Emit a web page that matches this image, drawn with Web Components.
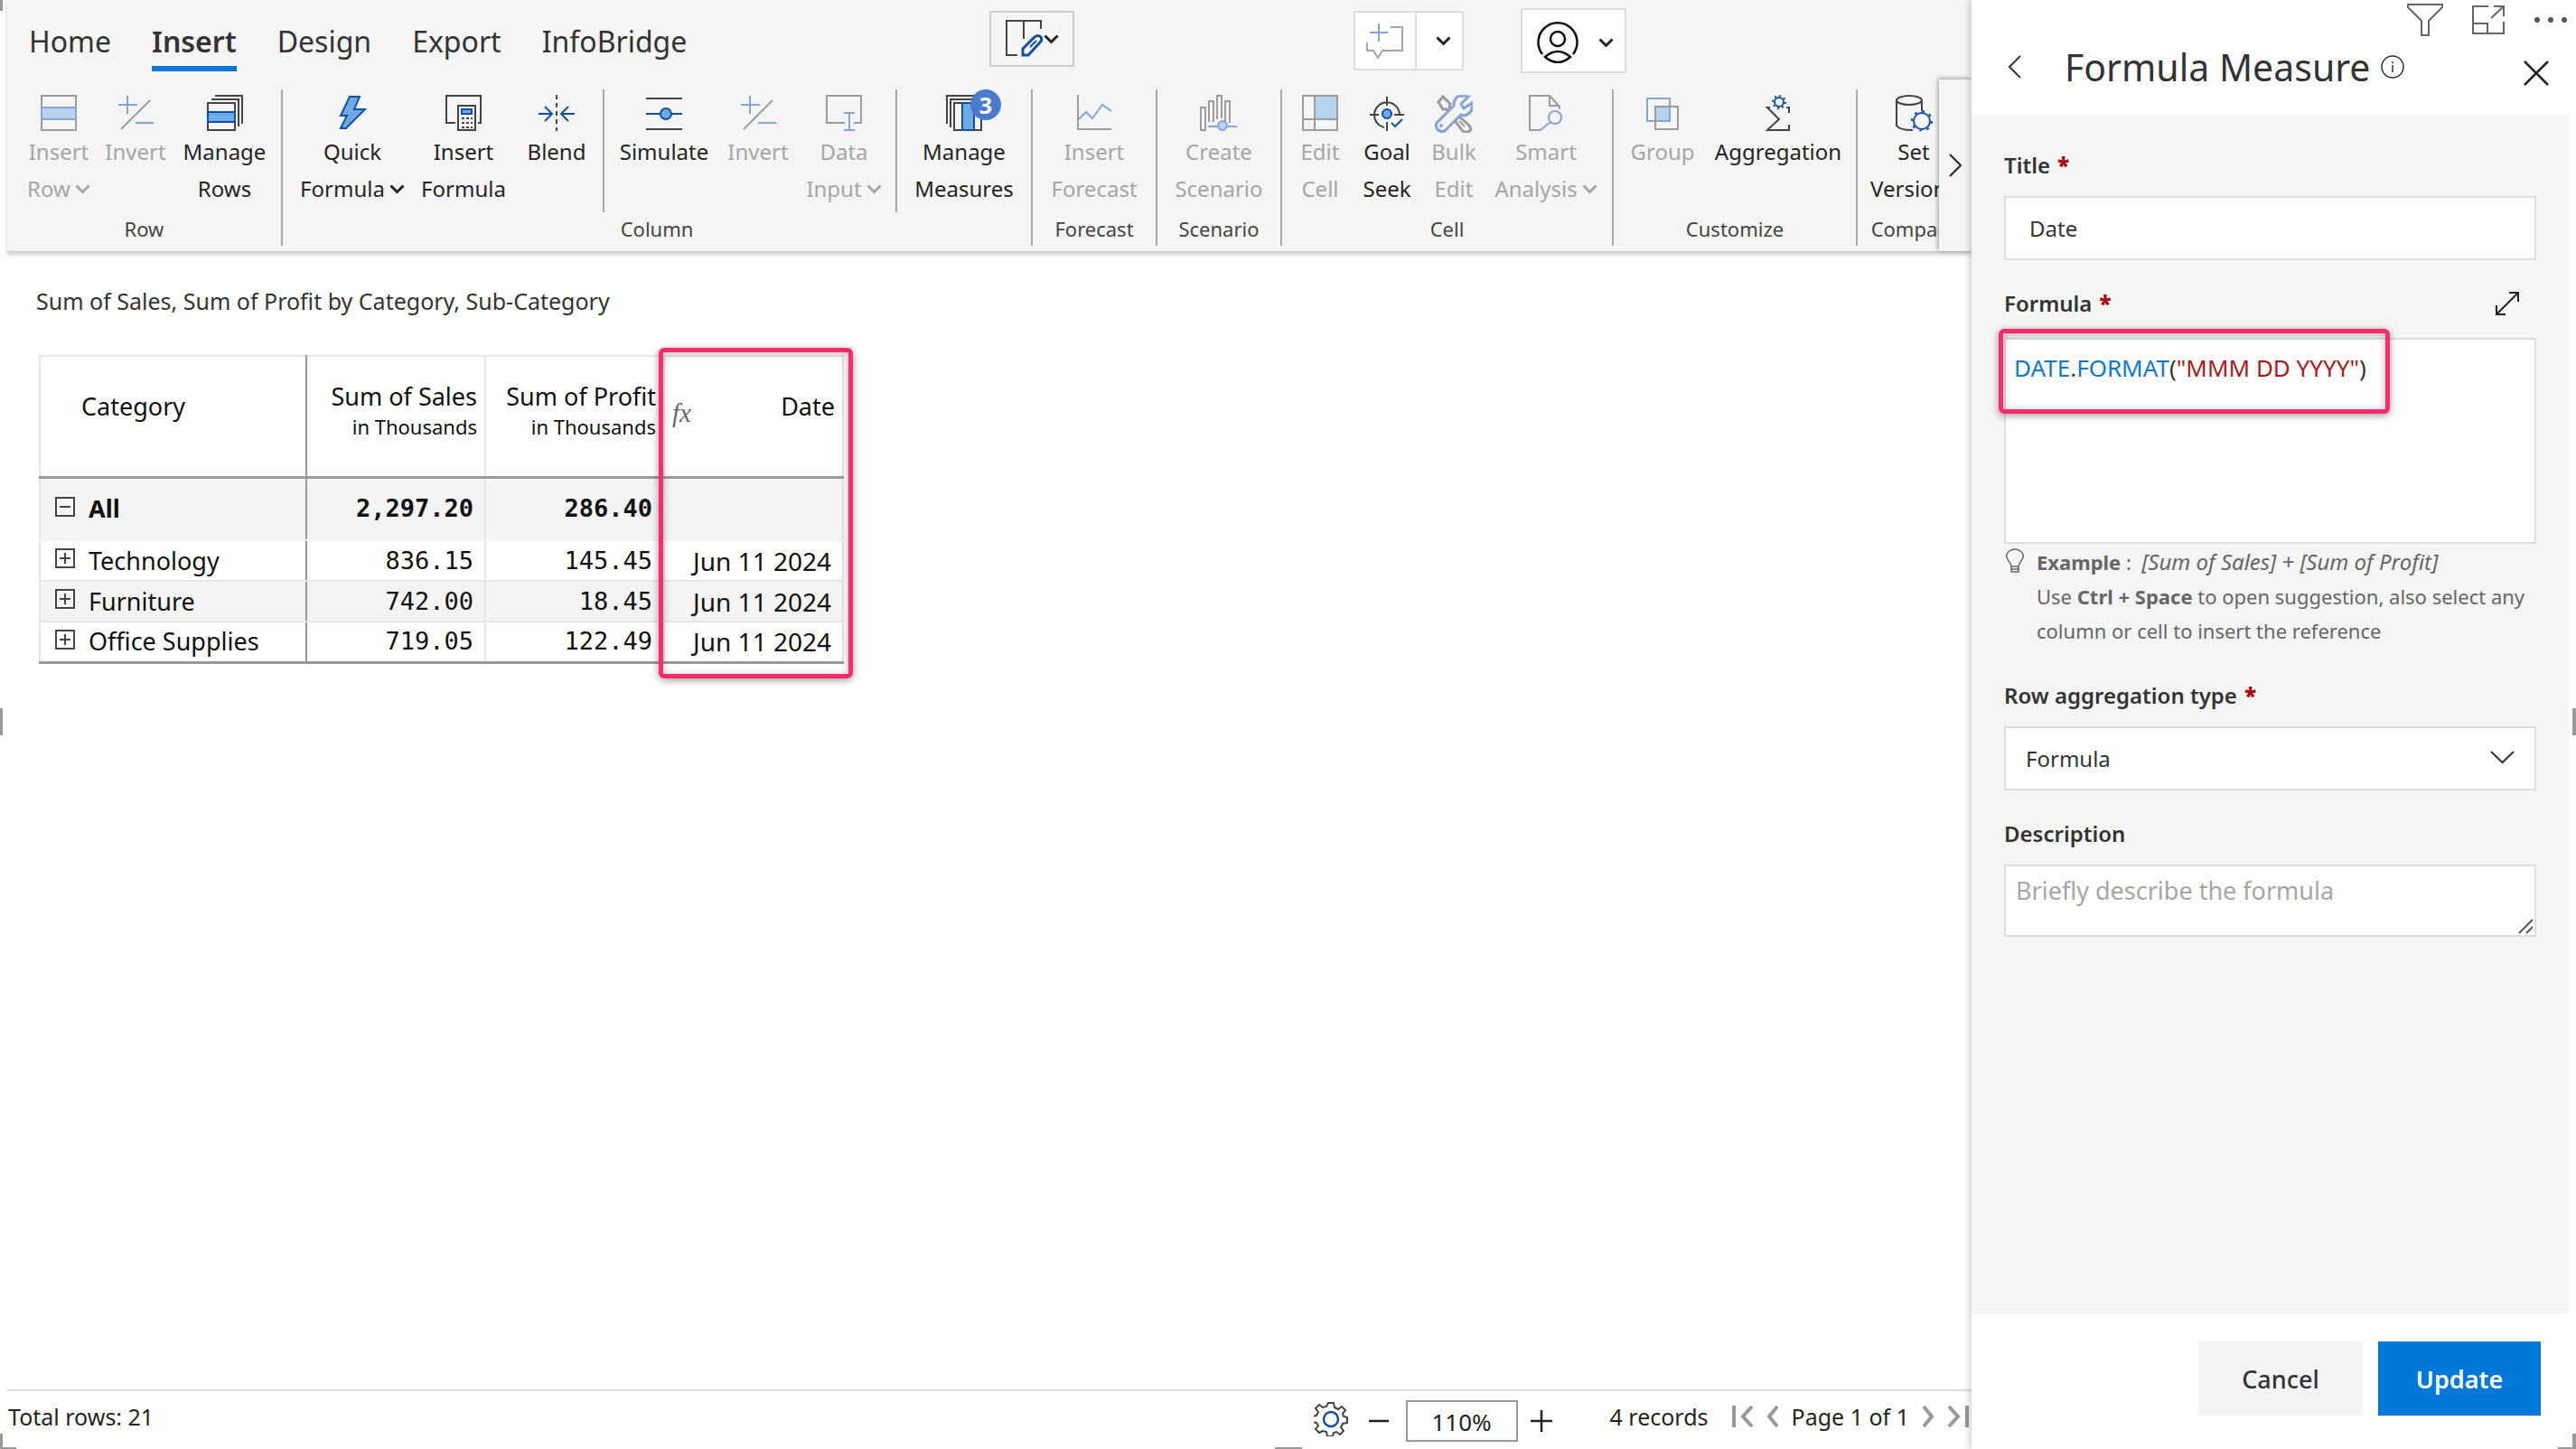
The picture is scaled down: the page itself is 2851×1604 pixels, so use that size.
<!DOCTYPE html>
<html lang="en">
<head>
<meta charset="utf-8">
<title>Formula Measure</title>
<style>
  html, body { margin: 0; height: 100%; background: #fff; }
  body { font-family: "Noto Sans", "Open Sans", sans-serif; color: #252423; }
</style>
</head>
<body>
<report-app></report-app>

<script>
const ICONS = {
  insertRow: [40, 40, `<path class="k" d="M1 1h38v38H1z"/><path class="b f" d="M1 14h38v13H1z"/>`],
  invert: [40, 40, `<path class="b" d="M1 11h21M11 1v20M20 31h20"/><path class="k" d="M4 38L36 6"/>`],
  manageRows: [40, 40, `<path class="k" d="M9 1h30v31M5 5h30v30M1 9h30v30H1z"/><path class="b f" d="M1 19h30v11H1z"/>`],
  quick: [40, 40, `<path class="b f" d="M17 2h11l-6 14h12L13 37h-6l7-14H7z"/>`],
  insertFormula: [40, 40, `<path class="k" d="M11 31H1V1h38v30h-3"/><path class="k" d="M14 12h19v27H14z"/><path class="b f" d="M18 16h11v5H18z"/><path class="k" stroke-dasharray="3 2" d="M18 26h12M18 31h12M18 36h12"/>`],
  blend: [40, 40, `<path class="k" stroke-dasharray="5 4" d="M20 0v40"/><path class="b" d="M0 21h15M7 13l8 8-8 8M40 21H25M33 13l-8 8 8 8"/>`],
  simulate: [40, 40, `<path class="k" d="M0 4h40M0 38h40"/><path class="b" d="M0 21h40"/><circle class="b f" cx="22" cy="21" r="6"/>`],
  dataInput: [40, 40, `<path class="k" d="M21 31H1V1h38v30h-8"/><path class="b" d="M20 20h12M26 20v19M20 39h12"/>`],
  manageMeasures: [40, 40, `<path class="k" d="M1 32V1h31M5 36V5h30M9 9h30v30H9z"/><path class="b f" d="M18 9h13v30H18z"/>`],
  forecast: [40, 40, `<path class="k" d="M2 0v38h37"/><path class="b" d="M3 27l8-8 7 7 11-15 10 7"/>`],
  scenario: [42, 40, `<path class="k" d="M1 14h5v25H1zM10 30V7h5v23M19 27V1h5v25M28 30V7h5v24"/><path class="b" d="M9 35h32"/><circle class="b f" cx="25" cy="34" r="5"/>`],
  editCell: [40, 40, `<path class="f" d="M14 1h25v25H14z"/><path class="k" d="M1 1h38v38H1zM14 1v38M1 27h38"/>`],
  goal: [40, 40, `<path class="k" d="M34 22A14 14 0 1 0 17 36M20 2v10M20 30v10M1 22h10M28 22h11"/><circle class="b f" cx="20" cy="21" r="5"/><path class="b" d="M25 31l4 4 8-8"/>`],
  bulk: [42, 42, `<path class="k w" d="M4 8l5-6 8 8-1 4 22 20q4 6-2 7-4 1-6-2L13 16l-4 0z"/><path class="k" d="M27 29l6 6"/><path class="b w" d="M37 2l-8 8 3 5 9-6q2 12-9 14l-3-1L12 39q-5 4-10-2-2-5 2-8l17-17q0-11 9-11z"/><circle class="b" cx="7" cy="34" r="1"/>`],
  smart: [40, 40, `<path class="k" d="M14 39H2V1h22l11 12v3M24 1v11h10"/><circle class="b" cx="30" cy="25" r="7"/><path class="b" d="M25 30L14 39"/>`],
  group: [40, 40, `<path class="f" d="M12 13h16v15H12z"/><path class="b" d="M3 4h25v25H3z"/><path class="k" d="M12 13h25v25H12z"/>`],
  aggregation: [40, 40, `<path class="k" d="M11 14H8l13 13L8 39h24v-6M32 20v-6h-3"/><circle class="b" cx="21" cy="8" r="5"/><circle class="b" cx="21" cy="8" r="7" stroke-dasharray="2 3.5"/>`],
  setVersion: [42, 40, `<ellipse class="k" cx="16" cy="6" rx="14" ry="5"/><path class="k" d="M2 6v28q3 5 18 5M30 6v12"/><circle class="b" cx="30" cy="29" r="9"/><circle class="b" cx="30" cy="29" r="11" stroke-dasharray="3 5.6"/>`],
  layoutEdit: [42, 42, `<path class="k" d="M13 39H1V1h38v9M20 1v20"/><path class="b" style="stroke-width:3" d="M19 32l13-13q4-3 7 0 2 4-1 6L25 39h-6z"/><path class="b" d="M27 30l7-7"/>`],
  comment: [42, 40, `<path class="b" d="M4 11h20M14 1v20"/><path class="k" d="M27 5h13v26H18l-5 8-5-8H1v-9"/>`],
  user: [46, 46, `<g fill="none" stroke="#111" stroke-width="2.5"><path d="M6 36a21.500 21.500 0 1 1 34 0"/><circle cx="23" cy="19" r="8"/><path d="M9 39q14-12 28 0-14 12-28 0z"/></g>`],
  caret: [17, 11, `<path d="M1.500 1.500l7 7 7-7" fill="none" stroke="currentColor" stroke-width="3"/>`],
  right: [14, 26, `<path d="M1 1l12 12L1 25" fill="none" stroke="currentColor" stroke-width="2"/>`],
  left: [14, 26, `<path d="M13 1L1 13l12 12" fill="none" stroke="currentColor" stroke-width="2"/>`],
  down: [27, 15, `<path d="M1 1l12.500 12L26 1" fill="none" stroke="currentColor" stroke-width="2"/>`],
  filter: [40, 36, `<path d="M1 1h38v3L24 19v16h-8V19L1 4z" fill="none" stroke="#666" stroke-width="2"/>`],
  focus: [36, 32, `<path d="M18 1H1v30h34V18M1 20h16v11M21 14L35 1M24 1h11v11" fill="none" stroke="#666" stroke-width="2"/>`],
  more: [38, 8, `<g fill="#555"><circle cx="4" cy="4" r="3"/><circle cx="19" cy="4" r="3"/><circle cx="34" cy="4" r="3"/></g>`],
  info: [26, 26, `<circle cx="13" cy="13" r="12" fill="none" stroke="#333" stroke-width="1.500"/><path d="M13 11v8M13 7v2" stroke="#333" stroke-width="1.500"/>`],
  close: [28, 28, `<path d="M1 1l26 26M27 1L1 27" stroke="#222" stroke-width="2.500"/>`],
  expand: [26, 26, `<path d="M1 25L25 1M15 1h10v10M1 15v10h10" fill="none" stroke="#222" stroke-width="2"/>`],
  bulb: [20, 28, `<path d="M6 20q-1-4-3-6-5-7 1-11 6-4 12 0 6 4 1 11-2 2-3 6zM6 20v6h8v-6M6 23h8" fill="none" stroke="#666" stroke-width="1.500"/>`],
  resizer: [17, 17, `<path d="M1 16L16 1M9 16l7-7" stroke="#555" stroke-width="2"/>`],
  gear: [38, 38, `<path d="M16 2h6l1 5 4 2 4-3 4 4-3 4 1 3 4 1v6l-5 1-2 4 3 4-4 4-4-3-3 1-1 4h-6l-1-5-4-1-4 2-4-4 3-4-2-3-5-1v-6l5-1 2-4-3-4 4-4 4 3 4-1z" transform="translate(0 -1)" fill="none" stroke="#444" stroke-width="2"/><circle cx="19" cy="19" r="8" fill="none" stroke="#1250a5" stroke-width="2.500"/>`],
  minus: [24, 24, `<path d="M1 12h22" stroke="#222" stroke-width="2.500"/>`],
  plus: [24, 24, `<path d="M0 12h24M12 0v24" stroke="#222" stroke-width="2.500"/>`],
  first: [24, 24, `<path d="M2 0v24M22 1L12 12l10 11" fill="none" stroke="#999" stroke-width="4"/>`],
  prev: [14, 24, `<path d="M12 1L3 12l9 11" fill="none" stroke="#999" stroke-width="4"/>`],
  next: [14, 24, `<path d="M2 1l9 11-9 11" fill="none" stroke="#999" stroke-width="4"/>`],
  last: [24, 24, `<path d="M22 0v24M2 1l10 11L2 23" fill="none" stroke="#999" stroke-width="4"/>`],
  boxMinus: [22, 22, `<path d="M1 1h20v20H1zM5 11h12" fill="none" stroke="#444" stroke-width="2"/>`],
  boxPlus: [22, 22, `<path d="M1 1h20v20H1zM5 11h12M11 5v12" fill="none" stroke="#444" stroke-width="2"/>`]
};

const define = (name, html) => customElements.define(name, class extends HTMLElement {
  constructor() {
    super();
    this.attachShadow({ mode: "open" });
  }
  connectedCallback() {
    if (this.shadowRoot.childNodes.length) return;
    this.shadowRoot.innerHTML = typeof html === "function" ? html(this) : html;
  }
});

const RESET = `
  *, *::before, *::after { box-sizing: border-box; }
  button { font: inherit; color: inherit; background: none; border: 0; padding: 0; margin: 0; display: inline-flex; align-items: center; justify-content: center; }
`;

define("ui-icon", el => {
  const [w, h, body] = ICONS[el.getAttribute("name")];
  return `<style>
    :host { display: inline-block; line-height: 0; flex: none; }
    svg { display: block; }
    .k, .b { fill: none; stroke-width: 2; }
    .k { stroke: var(--ink, #444); }
    .b { stroke: var(--accent, #1250a5); }
    .f { fill: var(--tint, #6eaae6); }
    .w { fill: #f5f5f5; stroke-width: 3; }
  </style><svg width="${w}" height="${h}" viewBox="0 0 ${w} ${h}" aria-hidden="true">${body}</svg>`;
});

define("ribbon-tab", `<style>${RESET}
    :host { display: block; }
    button { font-size: 32px; line-height: 44px; height: 55px; align-items: flex-start; border-bottom: 6px solid transparent; color: #333; }
    :host([active]) button { font-weight: 600; border-color: #0078d4; }
  </style><button type="button" role="tab"><slot></slot></button>`);

define("ribbon-button", el => `<style>${RESET}
    :host { display: block; flex: none; width: var(--w); }
    button { width: 100%; padding-top: 6px; flex-direction: column; justify-content: flex-start; color: #252423; position: relative; }
    .label { font-size: 24px; line-height: 41px; margin-top: 2px; white-space: nowrap; text-align: center; }
    .label ui-icon { margin-left: 5px; vertical-align: 3px; }
    :host([disabled]) { --ink: #9c9c9c; --accent: #86a5d4; --tint: #b5d3ef; }
    :host([disabled]) button { color: #a6a6a6; }
    .art { position: relative; display: block; height: 40px; }
    .badge { position: absolute; left: 27px; top: -6px; width: 34px; height: 34px; border-radius: 50%; background: #4a7ccb; color: #fff; font-weight: 700; font-size: 25px; line-height: 34px; text-align: center; }
  </style><button type="button" ${el.hasAttribute("disabled") ? "disabled" : ""}>
    <span class="art"><ui-icon name="${el.getAttribute("icon")}"></ui-icon>${el.hasAttribute("badge") ? `<span class="badge">${el.getAttribute("badge")}</span>` : ""}</span>
    <span class="label"><slot></slot>${el.hasAttribute("caret") ? `<ui-icon name="caret"></ui-icon>` : ""}</span></button>`);

define("ribbon-group", el => `<style>${RESET}
    :host { display: flex; flex-direction: column; flex: none; height: 173px; border-right: 2px solid #aaa; }
    .row { display: flex; height: 136px; padding: 0 var(--pr, 0) 0 var(--pl, 0); }
    .name { font-size: 22px; line-height: 36px; text-align: center; color: #444; white-space: nowrap; }
    ::slotted(hr) { margin: 0; border: 0; width: 2px; height: 136px; flex: none; background: #aaa; }
  </style><div class="row"><slot></slot></div><div class="name">${el.getAttribute("name")}</div>`);

define("app-ribbon", `<style>${RESET}
    :host { display: block; background: #f5f5f5; height: 278px; margin-left: 8px; border-bottom: 1px solid #ccc; box-shadow: 0 3px 5px #0003; position: relative; }
    .top { display: grid; grid-template-columns: 1087fr 403fr 185fr 499fr; height: 99px; align-items: start; }
    nav { display: flex; gap: 45px; padding: 24px 0 0 24px; }
    .layout { width: 94px; height: 62px; margin-top: 12px; border: 2px solid #ccc; }
    .split { display: flex; width: 122px; height: 66px; margin-top: 12px; border: 2px solid #ddd; background: #fff; }
    .split button:first-child { width: 68px; border-right: 2px solid #ddd; --ink: #a5a5a5; --accent: #86a5d4; }
    .split button:last-child { flex: 1; padding-left: 8px; }
    .user { width: 117px; height: 72px; margin-top: 9px; border: 2px solid #ddd; background: #fff; gap: 22px; padding: 4px 0 0 3px; }
    .groups { display: flex; overflow: hidden; height: 176px; }
    .scroll { position: absolute; right: 0; bottom: 0; width: 36px; height: 190px; background: #f5f5f5; box-shadow: -1px -1px 5px #0006; }
  </style>
  <div class="top">
    <nav role="tablist"><ribbon-tab>Home</ribbon-tab><ribbon-tab active>Insert</ribbon-tab><ribbon-tab>Design</ribbon-tab><ribbon-tab>Export</ribbon-tab><ribbon-tab>InfoBridge</ribbon-tab></nav>
    <button class="layout" type="button" aria-label="Edit layout"><ui-icon name="layoutEdit"></ui-icon><ui-icon name="caret"></ui-icon></button>
    <div class="split"><button type="button" aria-label="Add comment"><ui-icon name="comment"></ui-icon></button><button type="button" aria-label="Comment options"><ui-icon name="caret"></ui-icon></button></div>
    <button class="user" type="button" aria-label="Account"><ui-icon name="user"></ui-icon><ui-icon name="caret"></ui-icon></button>
  </div>
  <div class="groups">
    <ribbon-group name="Row" style="--pl:14px;--pr:6px">
      <ribbon-button icon="insertRow" disabled caret style="--w:86px">Insert<br>Row</ribbon-button>
      <ribbon-button icon="invert" disabled style="--w:84px">Invert</ribbon-button>
      <ribbon-button icon="manageRows" style="--w:113px">Manage<br>Rows</ribbon-button>
    </ribbon-group>
    <ribbon-group name="Column" style="--pl:6px">
      <ribbon-button icon="quick" caret style="--w:142px">Quick<br>Formula</ribbon-button>
      <ribbon-button icon="insertFormula" style="--w:104px">Insert<br>Formula</ribbon-button>
      <ribbon-button icon="blend" style="--w:102px">Blend</ribbon-button>
      <hr>
      <ribbon-button icon="simulate" style="--w:132px">Simulate</ribbon-button>
      <ribbon-button icon="invert" disabled style="--w:76px">Invert</ribbon-button>
      <ribbon-button icon="dataInput" disabled caret style="--w:114px">Data<br>Input</ribbon-button>
      <hr>
      <ribbon-button icon="manageMeasures" badge="3" style="--w:148px">Manage<br>Measures</ribbon-button>
    </ribbon-group>
    <ribbon-group name="Forecast"><ribbon-button icon="forecast" disabled style="--w:136px">Insert<br>Forecast</ribbon-button></ribbon-group>
    <ribbon-group name="Scenario"><ribbon-button icon="scenario" disabled style="--w:136px">Create<br>Scenario</ribbon-button></ribbon-group>
    <ribbon-group name="Cell" style="--pl:5px;--pr:8px">
      <ribbon-button icon="editCell" disabled style="--w:74px">Edit<br>Cell</ribbon-button>
      <ribbon-button icon="goal" style="--w:74px">Goal<br>Seek</ribbon-button>
      <ribbon-button icon="bulk" disabled style="--w:74px">Bulk<br>Edit</ribbon-button>
      <ribbon-button icon="smart" disabled caret style="--w:130px">Smart<br>Analysis</ribbon-button>
    </ribbon-group>
    <ribbon-group name="Customize" style="--pl:4px;--pr:8px">
      <ribbon-button icon="group" disabled style="--w:100px">Group</ribbon-button>
      <ribbon-button icon="aggregation" style="--w:156px">Aggregation</ribbon-button>
    </ribbon-group>
    <ribbon-group name="Compare"><ribbon-button icon="setVersion" style="--w:124px">Set<br>Versions</ribbon-button></ribbon-group>
  </div>
  <button class="scroll" type="button" aria-label="Scroll ribbon"><ui-icon name="right"></ui-icon></button>`);

const ROWS = [
  ["All", "2,297.20", "286.40", ""],
  ["Technology", "836.15", "145.45", "Jun 11 2024"],
  ["Furniture", "742.00", "18.45", "Jun 11 2024"],
  ["Office Supplies", "719.05", "122.49", "Jun 11 2024"]
];

define("pivot-table", () => `<style>${RESET}
    :host { display: block; position: relative; width: max-content; color: #111; }
    table { border-collapse: collapse; table-layout: fixed; width: 890px; font-size: 27px; }
    .c1 { width: 295px; } .c2, .c3, .c4 { width: 198px; }
    th, td { border: 2px solid #e6e6e6; padding: 0; font-weight: 400; line-height: 34px; }
    thead th { height: 134px; border-bottom: 3px solid #999; text-align: right; padding-right: 8px; vertical-align: middle; white-space: nowrap; }
    thead th:first-child { text-align: left; padding: 0 0 22px 45px; }
    thead th:first-child, tbody th { border-right: 2px solid #999; }
    thead th small { display: block; font-size: 22px; line-height: 32px; }
    thead .sum { padding-bottom: 12px; }
    thead .date { padding-bottom: 8px; }
    .date div { display: flex; justify-content: space-between; padding-left: 8px; }
    .date i { font: italic 29px/48px "Liberation Serif", serif; color: #666; }
    tbody th { text-align: left; }
    tbody th div { display: flex; align-items: center; gap: 15px; padding-left: 16px; }
    tbody th button { margin-bottom: 5px; }
    tbody tr { height: 45px; }
    tbody tr:nth-child(odd) { background: #f4f4f4; }
    tbody tr:first-child { height: 70px; }
    tbody tr:first-child > * { font-weight: 700; border-bottom-color: #f4f4f4; }
    tbody tr:last-child > * { border-bottom: 3px solid #999; }
    td { text-align: right; padding-right: 12px; font-family: "DejaVu Sans Mono", monospace; }
    td:last-child { font-family: inherit; font-size: 28px; }
    .mark { position: absolute; top: -8px; bottom: -16px; right: -10px; width: 215px; border: 5px solid #fb2c6c; border-radius: 6px; box-shadow: 0 2px 8px #0006, inset 0 2px 10px #0004; }
  </style>
  <table>
    <colgroup><col class="c1"><col class="c2"><col class="c3"><col class="c4"></colgroup>
    <thead><tr><th scope="col">Category</th><th scope="col" class="sum">Sum of Sales<small>in Thousands</small></th><th scope="col" class="sum">Sum of Profit<small>in Thousands</small></th><th scope="col" class="date"><div><i>fx</i><span>Date</span></div></th></tr></thead>
    <tbody>${ROWS.map((r, i) => `<tr><th scope="row"><div><button type="button" aria-label="Toggle ${r[0]}"><ui-icon name="${i ? "boxPlus" : "boxMinus"}"></ui-icon></button><span>${r[0]}</span></div></th><td>${r[1]}</td><td>${r[2]}</td><td>${r[3]}</td></tr>`).join("")}</tbody>
  </table><div class="mark"></div>`);

define("status-bar", `<style>${RESET}
    :host { box-sizing: border-box; display: flex; align-items: flex-start; height: 66px; margin-left: 8px; border-top: 2px solid #ddd; font-size: 25px; line-height: 36px; padding: 10px 3px 0 1px; white-space: nowrap; }
    .total { flex: 1; }
    .zoom { display: flex; align-items: center; gap: 18px; margin-right: 64px; height: 46px; }
    .gear { margin: 0 4px 4px 0; }
    input { width: 124px; height: 46px; border: 2px solid #999; text-align: center; font: inherit; font-size: 26px; color: #222; padding: 2px 0 0; background: #fff; }
    .zoom button:last-child { margin-left: -4px; }
    .pages { display: flex; align-items: center; gap: 14px; height: 36px; }
    .pages span:first-child { margin-right: 12px; }
  </style>
  <span class="total">Total rows: 21</span>
  <div class="zoom"><button class="gear" type="button" aria-label="Settings"><ui-icon name="gear"></ui-icon></button><button type="button" aria-label="Zoom out"><ui-icon name="minus"></ui-icon></button><input aria-label="Zoom" value="110%"><button type="button" aria-label="Zoom in"><ui-icon name="plus"></ui-icon></button></div>
  <div class="pages"><span>4 records</span><button type="button" aria-label="First page"><ui-icon name="first"></ui-icon></button><button type="button" aria-label="Previous page"><ui-icon name="prev"></ui-icon></button><span>Page 1 of 1</span><button type="button" aria-label="Next page"><ui-icon name="next"></ui-icon></button><button type="button" aria-label="Last page"><ui-icon name="last"></ui-icon></button></div>`);

define("formula-panel", `<style>${RESET}
    :host { display: flex; flex-direction: column; background: #fff; box-shadow: -2px 0 8px #0003; position: relative; color: #333; }
    .tools { display: flex; justify-content: flex-end; align-items: center; gap: 32px; height: 44px; padding-right: 9px; }
    header { display: flex; align-items: center; height: 83px; padding: 0 30px 23px 41px; }
    h1 { margin: 0 12px 0 48px; font-weight: 400; font-size: 41px; line-height: 60px; }
    header .close { margin: 14px 0 0 auto; }
    main { flex: 1; margin-right: 8px; background: #f5f5f5; padding: 38px 36px 0; }
    .label { display: flex; justify-content: space-between; align-items: center; font-size: 24px; line-height: 36px; font-weight: 600; margin-bottom: 16px; padding-right: 19px; }
    .label.editor { margin-bottom: 20px; }
    .label b { color: #b00010; margin-left: 2px; }
    .field { display: block; width: 100%; border: 2px solid #ddd; background: #fff; font: inherit; color: #333; margin: 0 0 30px; border-radius: 0; outline: 0; resize: none; }
    input.field, select.field { height: 71px; font-size: 24px; padding: 0 26px; }
    select.field { appearance: none; padding: 0 22px; }
    textarea.field { height: 80px; font-size: 27px; line-height: 36px; padding: 9px 11px; margin: 0; }
    textarea::placeholder { color: #a6a6a6; opacity: 1; }
    .code { height: 228px; margin-bottom: 0; font-size: 26px; line-height: 36px; padding: 13px 9px; white-space: nowrap; }
    .wrap { position: relative; }
    .over { position: absolute; pointer-events: none; }
    .mark { position: absolute; left: -6px; top: -10px; width: 433px; height: 94px; border: 5px solid #fb2c6c; border-radius: 6px; box-shadow: 0 2px 8px #0006, inset 0 2px 10px #0004; pointer-events: none; }
    .fn { color: #0c78d3; } .str { color: #ab1a1a; }
    .hint { display: flex; align-items: flex-start; gap: 14px; padding: 1px 0 35px 2px; font-size: 22px; line-height: 38px; color: #666; }
    .hint ui-icon { margin-top: 4px; }
    .hint p { margin: 0; white-space: nowrap; }
    .hint i { font-size: 24px; line-height: 24px; }
    footer { height: 150px; display: flex; justify-content: flex-end; gap: 18px; padding: 31px 39px 0 0; }
    footer button { width: 180px; height: 82px; background: #f3f3f3; font-size: 27px; font-weight: 500; color: #333; }
    footer .primary { background: #0078d7; color: #fff; font-weight: 600; }
  </style>
  <div class="tools"><button type="button" aria-label="Filters"><ui-icon name="filter"></ui-icon></button><button type="button" aria-label="Focus mode"><ui-icon name="focus"></ui-icon></button><button type="button" aria-label="More options"><ui-icon name="more"></ui-icon></button></div>
  <header><button type="button" aria-label="Back"><ui-icon name="left"></ui-icon></button><h1>Formula Measure</h1><ui-icon name="info"></ui-icon><button class="close" type="button" aria-label="Close"><ui-icon name="close"></ui-icon></button></header>
  <main>
    <div class="label"><label for="title">Title <b>*</b></label></div>
    <input class="field" id="title" value="Date">
    <div class="label editor"><span id="formula">Formula <b>*</b></span><button type="button" aria-label="Expand editor"><ui-icon name="expand"></ui-icon></button></div>
    <div class="wrap"><div class="field code" contenteditable="true" spellcheck="false" role="textbox" aria-labelledby="formula"><span class="fn">DATE</span>.<span class="fn">FORMAT</span>(<span class="str">"MMM DD YYYY"</span>)</div><div class="mark"></div></div>
    <div class="hint"><ui-icon name="bulb"></ui-icon><p><b>Example</b> :&nbsp; <i>[Sum of Sales] + [Sum of Profit]</i><br>Use <b>Ctrl + Space</b> to open suggestion, also select any<br>column or cell to insert the reference</p></div>
    <div class="label"><label for="agg">Row aggregation type <b>*</b></label></div>
    <div class="wrap"><select class="field" id="agg"><option>Formula</option></select><ui-icon class="over" style="right:24px;top:27px" name="down"></ui-icon></div>
    <div class="label"><label for="desc">Description</label></div>
    <div class="wrap"><textarea class="field" id="desc" placeholder="Briefly describe the formula"></textarea><ui-icon class="over" style="right:3px;bottom:3px" name="resizer"></ui-icon></div>
  </main>
  <footer><button type="button">Cancel</button><button type="button" class="primary">Update</button></footer>`);

define("report-app", `<style>
    :host { display: flex; min-height: 100vh; position: relative; overflow: hidden; }
    .report { flex: 1; min-width: 0; display: flex; flex-direction: column; }
    formula-panel { flex: none; width: 669px; }
    .sheet { flex: 1; padding: 36px 0 0 43px; }
    h2 { margin: 0 0 42px -3px; font-size: 25px; line-height: 36px; font-weight: 400; color: #333; }
    .grip { position: absolute; border: 0 solid #999; }
    .tl { left: 0; top: 0; height: 12px; border-left-width: 3px; }
    .l { left: 0; top: calc(50% - 18px); height: 30px; border-left-width: 3px; }
    .r { right: 0; top: calc(50% - 18px); height: 30px; border-left-width: 4px; }
    .bl { left: 0; bottom: 0; width: 18px; height: 17px; border-width: 0 0 2px 3px; box-sizing: border-box; }
    .b { left: calc(50% - 15px); bottom: 0; width: 30px; border-bottom-width: 2px; }
    .br { right: 0; bottom: 0; width: 20px; height: 17px; border-width: 0 4px 2px 0; box-sizing: border-box; }
  </style>
  <div class="report"><app-ribbon></app-ribbon><div class="sheet"><h2>Sum of Sales, Sum of Profit by Category, Sub-Category</h2><pivot-table></pivot-table></div><status-bar></status-bar></div>
  <formula-panel></formula-panel>
  <div class="grip tl"></div><div class="grip l"></div><div class="grip r"></div><div class="grip bl"></div><div class="grip b"></div><div class="grip br"></div>`);
</script>
</body>
</html>
